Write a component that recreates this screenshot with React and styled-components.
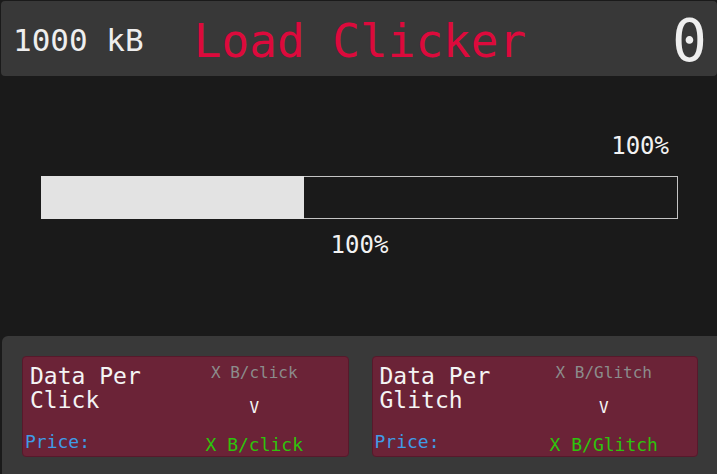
import React from 'react'
import styled, { createGlobalStyle } from 'styled-components'

const GlobalStyle = createGlobalStyle`
  html, body {
    margin: 0;
    padding: 0;
    background: #1a1a1a;
    height: 100%;
  }
  #root {
    min-height: 100vh;
    display: flex;
    flex-direction: column;
  }
  * {
    box-sizing: border-box;
  }
`

const Page = styled.div`
  flex: 1;
  display: flex;
  flex-direction: column;
  font-family: "DejaVu Sans Mono", "Liberation Mono", monospace;
  color: #eeeeee;
  overflow: hidden;
`

const Header = styled.header`
  height: 75px;
  margin: 1px 0 0 1px;
  background: #383838;
  border-radius: 4px;
  display: grid;
  grid-template-columns: 1fr auto 1fr;
  align-items: center;
  padding: 0 10px 0 12px;
`

const Storage = styled.div`
  font-size: 31px;
  color: #eeeeee;
  line-height: 1;
  padding-top: 3px;
`

const Title = styled.h1`
  margin: 0;
  font-size: 46px;
  font-weight: 400;
  color: #dc0a3c;
  line-height: 1;
  padding-top: 4px;
`

const Counter = styled.div`
  justify-self: end;
  font-size: 58px;
  font-weight: 400;
  line-height: 1;
  color: #eeeeee;
  padding-top: 4px;
`

const ProgressArea = styled.section`
  height: 260px;
  padding: 56px 39px 0 41px;
  display: flex;
  flex-direction: column;
`

const Percent = styled.div`
  font-size: 24px;
  line-height: 28px;
  color: #f2f2f2;
  text-align: ${p => p.$align || 'center'};
  padding-right: ${p => (p.$align === 'right' ? '9px' : '0')};
`

const Track = styled.div`
  height: 43px;
  margin: 16px 0 12px;
  border: 1px solid #c4c4c4;
  background: #1a1a1a;
  display: flex;
`

const Fill = styled.div`
  margin: -1px 0 -1px -1px;
  background: #e3e3e3;
`

const Shop = styled.section`
  flex: 1;
  margin-left: 2px;
  background: #393939;
  border-top-left-radius: 6px;
  padding: 20px 19px 0 20px;
  display: grid;
  grid-template-columns: 1fr 1fr;
  gap: 23px;
  align-content: start;
`

const Card = styled.div`
  height: 101px;
  background: #6b2337;
  border: 1px solid #57192b;
  border-radius: 4px;
  display: flex;
`

const CardLeft = styled.div`
  width: 138px;
  display: flex;
  flex-direction: column;
  justify-content: space-between;
  padding: 7px 0 4px 7px;
`

const CardTitle = styled.div`
  font-size: 23px;
  line-height: 24px;
  color: #f4f4f4;
`

const PriceLabel = styled.div`
  margin-left: -5px;
  font-size: 18px;
  line-height: 20px;
  color: #3f9ce6;
`

const CardRight = styled.div`
  flex: 1;
  display: flex;
  flex-direction: column;
  align-items: center;
  padding: 7px 0 1px;
`

const Rate = styled.div`
  font-size: 16px;
  line-height: 18px;
  color: #8c8c8c;
`

const Arrow = styled.div`
  margin-top: 17px;
  font-size: 16px;
  line-height: 18px;
  color: #f4f4f4;
`

const Cost = styled.div`
  margin-top: auto;
  font-size: 18px;
  line-height: 20px;
  color: #2ec30c;
`

const upgrades = [
  { name: 'Click', unit: 'B/click' },
  { name: 'Glitch', unit: 'B/Glitch' },
]

const App = () => {
  const progress = 41.4
  return (
    <Page>
      <GlobalStyle />
      <Header>
        <Storage>1000 kB</Storage>
        <Title>Load Clicker</Title>
        <Counter>0</Counter>
      </Header>
      <ProgressArea>
        <Percent $align="right">100%</Percent>
        <Track>
          <Fill style={{ width: `${progress}%` }} />
        </Track>
        <Percent>100%</Percent>
      </ProgressArea>
      <Shop>
        {upgrades.map(u => (
          <Card key={u.name}>
            <CardLeft>
              <CardTitle>Data Per<br />{u.name}</CardTitle>
              <PriceLabel>Price:</PriceLabel>
            </CardLeft>
            <CardRight>
              <Rate>X {u.unit}</Rate>
              <Arrow>V</Arrow>
              <Cost>X {u.unit}</Cost>
            </CardRight>
          </Card>
        ))}
      </Shop>
    </Page>
  )
}

export default App
